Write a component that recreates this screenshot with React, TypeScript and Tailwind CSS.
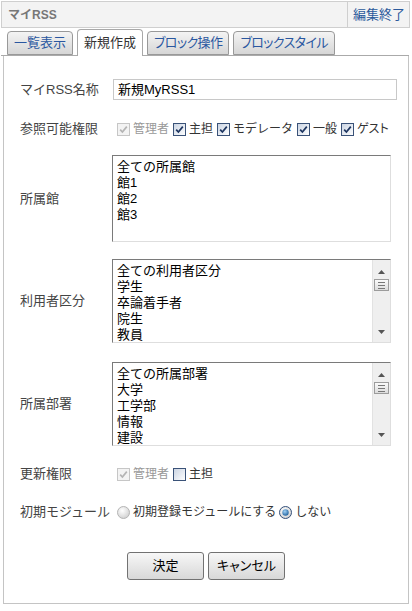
const CheckBox = ({ checked, disabled }: { checked: boolean; disabled?: boolean }) => (
  <svg width="13" height="13" viewBox="0 0 13 13" className="shrink-0">
    <defs>
      <linearGradient id="cbOn" x1="0" y1="0" x2="1" y2="1">
        <stop offset="0" stopColor="#c9d3e2" />
        <stop offset="1" stopColor="#ffffff" />
      </linearGradient>
    </defs>
    <rect
      x="0.5"
      y="0.5"
      width="12"
      height="12"
      fill={disabled ? "#f3f3f3" : "url(#cbOn)"}
      stroke={disabled ? "#c6c6c6" : "#3a5278"}
    />
    {checked && (
      <path
        d="M3.2 6.6L5.4 9L9.8 3.6"
        fill="none"
        stroke={disabled ? "#b4b4b4" : "#1d3560"}
        strokeWidth="1.7"
      />
    )}
  </svg>
);

const Radio = ({ checked }: { checked?: boolean }) => (
  <svg width="13" height="13" viewBox="0 0 13 13" className="shrink-0">
    <defs>
      <radialGradient id="rdOff" cx="0.4" cy="0.35" r="0.7">
        <stop offset="0" stopColor="#ffffff" />
        <stop offset="1" stopColor="#cfcfcf" />
      </radialGradient>
      <radialGradient id="rdOn" cx="0.4" cy="0.35" r="0.7">
        <stop offset="0" stopColor="#9fd0f5" />
        <stop offset="1" stopColor="#1d5f9c" />
      </radialGradient>
    </defs>
    <circle cx="6.5" cy="6.5" r="6" fill="url(#rdOff)" stroke={checked ? "#34507a" : "#b4b4b4"} />
    {checked && <circle cx="6.5" cy="6.5" r="3.2" fill="url(#rdOn)" />}
  </svg>
);

const ScrollBar = () => (
  <div className="w-[18px] h-full bg-[#efefef] border-l border-[#e2e2e2] flex flex-col items-center">
    <svg width="7" height="4" viewBox="0 0 7 4" className="mt-[10px]">
      <path d="M0 4L3.5 0L7 4Z" fill="#555" />
    </svg>
    <div className="mt-[5px] w-[15px] h-[12px] border border-[#9c9c9c] bg-linear-to-b from-[#fafafa] to-[#dcdcdc] flex flex-col items-center justify-center gap-[2px]">
      <div className="w-[7px] h-px bg-[#777]" />
      <div className="w-[7px] h-px bg-[#777]" />
      <div className="w-[7px] h-px bg-[#777]" />
    </div>
    <div className="flex-1" />
    <svg width="7" height="4" viewBox="0 0 7 4" className="mb-[8px]">
      <path d="M0 0L3.5 4L7 0Z" fill="#555" />
    </svg>
  </div>
);

const ListBox = ({ items, height, scroll }: { items: string[]; height: string; scroll?: boolean }) => (
  <div
    className={`w-[279px] ${height} border border-[#7a7a7a] border-r-[#dedede] border-b-[#dedede] flex overflow-hidden`}
  >
    <div className="flex-1 pl-[4px] pt-[3px] text-[13px] leading-[16px] text-black">
      {items.map((it) => (
        <div key={it}>{it}</div>
      ))}
    </div>
    {scroll && <ScrollBar />}
  </div>
);

const Row = ({ label, className, children }: { label: string; className: string; children: React.ReactNode }) => (
  <div className={`flex items-center ${className}`}>
    <div className="w-[92px] text-[13px] text-[#444] shrink-0">{label}</div>
    {children}
  </div>
);

const Tab = ({ label, active, tight }: { label: string; active?: boolean; tight?: boolean }) =>
  active ? (
    <div className="h-[27px] px-[6px] -mb-px border border-b-0 border-[#a8a8a8] rounded-t-[4px] bg-white text-[13px] text-[#333] flex items-center [font-feature-settings:'palt']">
      {label}
    </div>
  ) : (
    <div
      className={`h-[24px] px-[6px] border border-[#999] rounded-t-[4px] bg-linear-to-b from-[#f4f4f4] to-[#d6d6d6] text-[13px] text-[#2a57a0] flex items-center [font-feature-settings:'palt'] ${
        tight ? "tracking-[-0.6px]" : ""
      }`}
    >
      {label}
    </div>
  );

export default function App() {
  return (
    <div className="w-[412px] h-[611px] bg-white font-['Liberation_Sans','Noto_Sans_CJK_JP',sans-serif] pl-[1px] pt-[1px]">
      {/* title bar */}
      <div className="w-[409px] h-[27px] border border-[#cfcfcf] bg-[#f3f3f3] flex items-center justify-between">
        <span className="pl-[6px] text-[12px] font-bold text-[#777]">マイRSS</span>
        <span className="h-full border-l border-[#cfcfcf] pl-[5px] pr-[4px] text-[13px] text-[#2b5a9c] flex items-center">
          編集終了
        </span>
      </div>

      {/* tabs */}
      <div className="w-[408px] h-[28px] pl-[6px] flex items-end gap-[4px] border-b border-[#aaa]">
        <Tab label="一覧表示" />
        <Tab label="新規作成" active />
        <Tab label="ブロック操作" tight />
        <Tab label="ブロックスタイル" tight />
      </div>

      {/* panel */}
      <div className="ml-[2px] w-[406px] border-l border-r border-b border-[#c4c4c4] pl-[16px] pb-[23px] flex flex-col">
        <Row label="マイRSS名称" className="mt-[23px]">
          <div className="ml-[1px] w-[284px] h-[21px] border border-[#c8c8c8] pl-[4px] text-[13px] text-black flex items-center">
            新規MyRSS1
          </div>
        </Row>

        <Row label="参照可能権限" className="mt-[19px] h-[20px]">
          <div className="pl-[5px] flex items-center gap-[4px] text-[12px] text-[#333]">
            <span className="flex items-center gap-[3px] text-[#999]">
              <CheckBox checked disabled />
              管理者
            </span>
            <span className="flex items-center gap-[3px]">
              <CheckBox checked />
              主担
            </span>
            <span className="flex items-center gap-[3px]">
              <CheckBox checked />
              モデレータ
            </span>
            <span className="flex items-center gap-[3px]">
              <CheckBox checked />
              一般
            </span>
            <span className="flex items-center gap-[3px] [font-feature-settings:'palt']">
              <CheckBox checked />
              ゲスト
            </span>
          </div>
        </Row>

        <Row label="所属館" className="mt-[16px]">
          <ListBox items={["全ての所属館", "館1", "館2", "館3"]} height="h-[87px]" />
        </Row>

        <Row label="利用者区分" className="mt-[17px]">
          <ListBox items={["全ての利用者区分", "学生", "卒論着手者", "院生", "教員"]} height="h-[84px]" scroll />
        </Row>

        <Row label="所属部署" className="mt-[19px]">
          <ListBox items={["全ての所属部署", "大学", "工学部", "情報", "建設"]} height="h-[84px]" scroll />
        </Row>

        <Row label="更新権限" className="mt-[18px] h-[20px]">
          <div className="pl-[5px] flex items-center gap-[4px] text-[12px] text-[#333]">
            <span className="flex items-center gap-[3px] text-[#999]">
              <CheckBox checked disabled />
              管理者
            </span>
            <span className="flex items-center gap-[3px]">
              <CheckBox checked={false} />
              主担
            </span>
          </div>
        </Row>

        <Row label="初期モジュール" className="mt-[18px] h-[20px]">
          <div className="pl-[5px] flex items-center gap-[3px] text-[12px] text-[#333]">
            <Radio />
            <span>初期登録モジュールにする</span>
            <Radio checked />
            <span>しない</span>
          </div>
        </Row>

        <div className="mt-[30px] -ml-[16px] flex justify-center gap-[4px]">
          <button
            type="button"
            className="w-[77px] h-[28px] border border-[#727272] rounded-[3px] bg-linear-to-b from-[#f7f7f7] to-[#d8d8d8] text-[13px] text-black"
          >
            決定
          </button>
          <button
            type="button"
            className="w-[77px] h-[28px] border border-[#727272] rounded-[3px] bg-linear-to-b from-[#f7f7f7] to-[#d8d8d8] text-[13px] text-black [font-feature-settings:'palt']"
          >
            キャンセル
          </button>
        </div>
      </div>
    </div>
  );
}
